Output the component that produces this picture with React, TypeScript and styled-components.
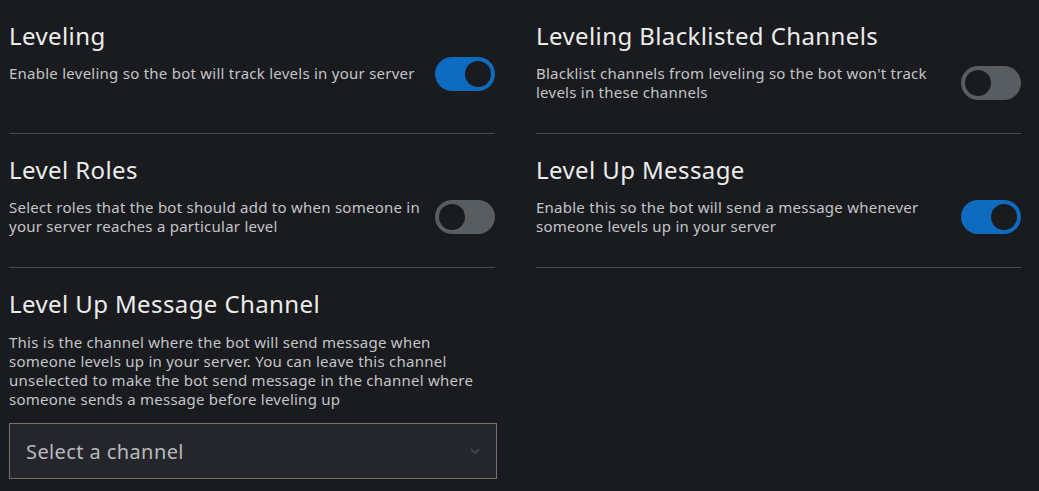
import React from 'react';
import styled, { createGlobalStyle } from 'styled-components';

const GlobalStyle = createGlobalStyle`
  html, body {
    margin: 0;
    padding: 0;
    background: #1a1b1e;
  }
  body {
    font-family: 'Noto Sans', 'Open Sans', sans-serif;
  }
`;

type Setting = {
  title: string;
  description: string;
  toggle?: boolean;
  select?: string;
};

const left: Setting[] = [
  {
    title: 'Leveling',
    description: 'Enable leveling so the bot will track levels in your server',
    toggle: true,
  },
  {
    title: 'Level Roles',
    description: 'Select roles that the bot should add to when someone in your server reaches a particular level',
    toggle: false,
  },
  {
    title: 'Level Up Message Channel',
    description:
      'This is the channel where the bot will send message when someone levels up in your server. You can leave this channel unselected to make the bot send message in the channel where someone sends a message before leveling up',
    select: 'Select a channel',
  },
];

const right: Setting[] = [
  {
    title: 'Leveling Blacklisted Channels',
    description: "Blacklist channels from leveling so the bot won't track levels in these channels",
    toggle: false,
  },
  {
    title: 'Level Up Message',
    description: 'Enable this so the bot will send a message whenever someone levels up in your server',
    toggle: true,
  },
];

const SettingBlock = ({ item }: { item: Setting }): React.ReactElement => {
  if (item.select !== undefined) {
    return (
      <Block $divider={false}>
        <Title>{item.title}</Title>
        <Description $wide>{item.description}</Description>
        <SelectBox>
          <span>{item.select}</span>
          <svg width="14" height="14" viewBox="0 0 14 14">
            <path d="M3 5l4 4 4-4" fill="none" stroke="#3f4448" strokeWidth="2" />
          </svg>
        </SelectBox>
      </Block>
    );
  }
  return (
    <Block $divider>
      <Title>{item.title}</Title>
      <Row>
        <Description>{item.description}</Description>
        <Toggle $on={!!item.toggle}>
          <Knob />
        </Toggle>
      </Row>
    </Block>
  );
};

const App = (): React.ReactElement => (
  <>
    <GlobalStyle />
    <Page>
      <Column>
        {left.map((s) => (
          <SettingBlock key={s.title} item={s} />
        ))}
      </Column>
      <Column>
        {right.map((s) => (
          <SettingBlock key={s.title} item={s} />
        ))}
      </Column>
    </Page>
  </>
);

const Page = styled.div`
  display: grid;
  grid-template-columns: 486px 485px;
  column-gap: 41px;
  padding: 20px 0 0 9px;
  min-height: 491px;
  box-sizing: border-box;
  background: #1a1b1e;
`;

const Column = styled.div`
  display: flex;
  flex-direction: column;
`;

const Block = styled.div<{ $divider: boolean }>`
  display: flex;
  flex-direction: column;
  height: ${({ $divider }) => ($divider ? '113px' : 'auto')};
  border-bottom: ${({ $divider }) => ($divider ? '1px solid #4a4b4f' : 'none')};
  margin-bottom: ${({ $divider }) => ($divider ? '20px' : '0')};
`;

const Title = styled.h2`
  margin: 0;
  font-size: 24px;
  font-weight: 400;
  letter-spacing: 0.4px;
  line-height: 32px;
  color: #ececec;
`;

const Row = styled.div`
  display: flex;
  align-items: center;
  justify-content: space-between;
  margin-top: 4px;
  min-height: 34px;
`;

const Description = styled.p<{ $wide?: boolean }>`
  margin: ${({ $wide }) => ($wide ? '13px 0 0' : '0')};
  padding: ${({ $wide }) => ($wide ? '0' : '8px 0')};
  max-width: ${({ $wide }) => ($wide ? '478px' : '412px')};
  font-size: 15px;
  letter-spacing: 0.25px;
  line-height: 19px;
  color: #c4c5c8;
`;

const Toggle = styled.div<{ $on: boolean }>`
  flex: none;
  display: flex;
  align-items: center;
  justify-content: ${({ $on }) => ($on ? 'flex-end' : 'flex-start')};
  width: 60px;
  height: 34px;
  padding: 0 4px;
  box-sizing: border-box;
  border-radius: 17px;
  background: ${({ $on }) => ($on ? '#0e6bbf' : '#585d62')};
`;

const Knob = styled.div`
  width: 26px;
  height: 26px;
  border-radius: 50%;
  background: #1a1b1e;
`;

const SelectBox = styled.div`
  display: flex;
  align-items: center;
  justify-content: space-between;
  margin-top: 14px;
  height: 56px;
  padding: 0 14px 0 16px;
  box-sizing: border-box;
  width: 488px;
  border: 1px solid #77716a;
  background: #25262b;
  color: #b9babd;
  font-size: 20px;
  letter-spacing: 0.4px;
`;

export default App;
